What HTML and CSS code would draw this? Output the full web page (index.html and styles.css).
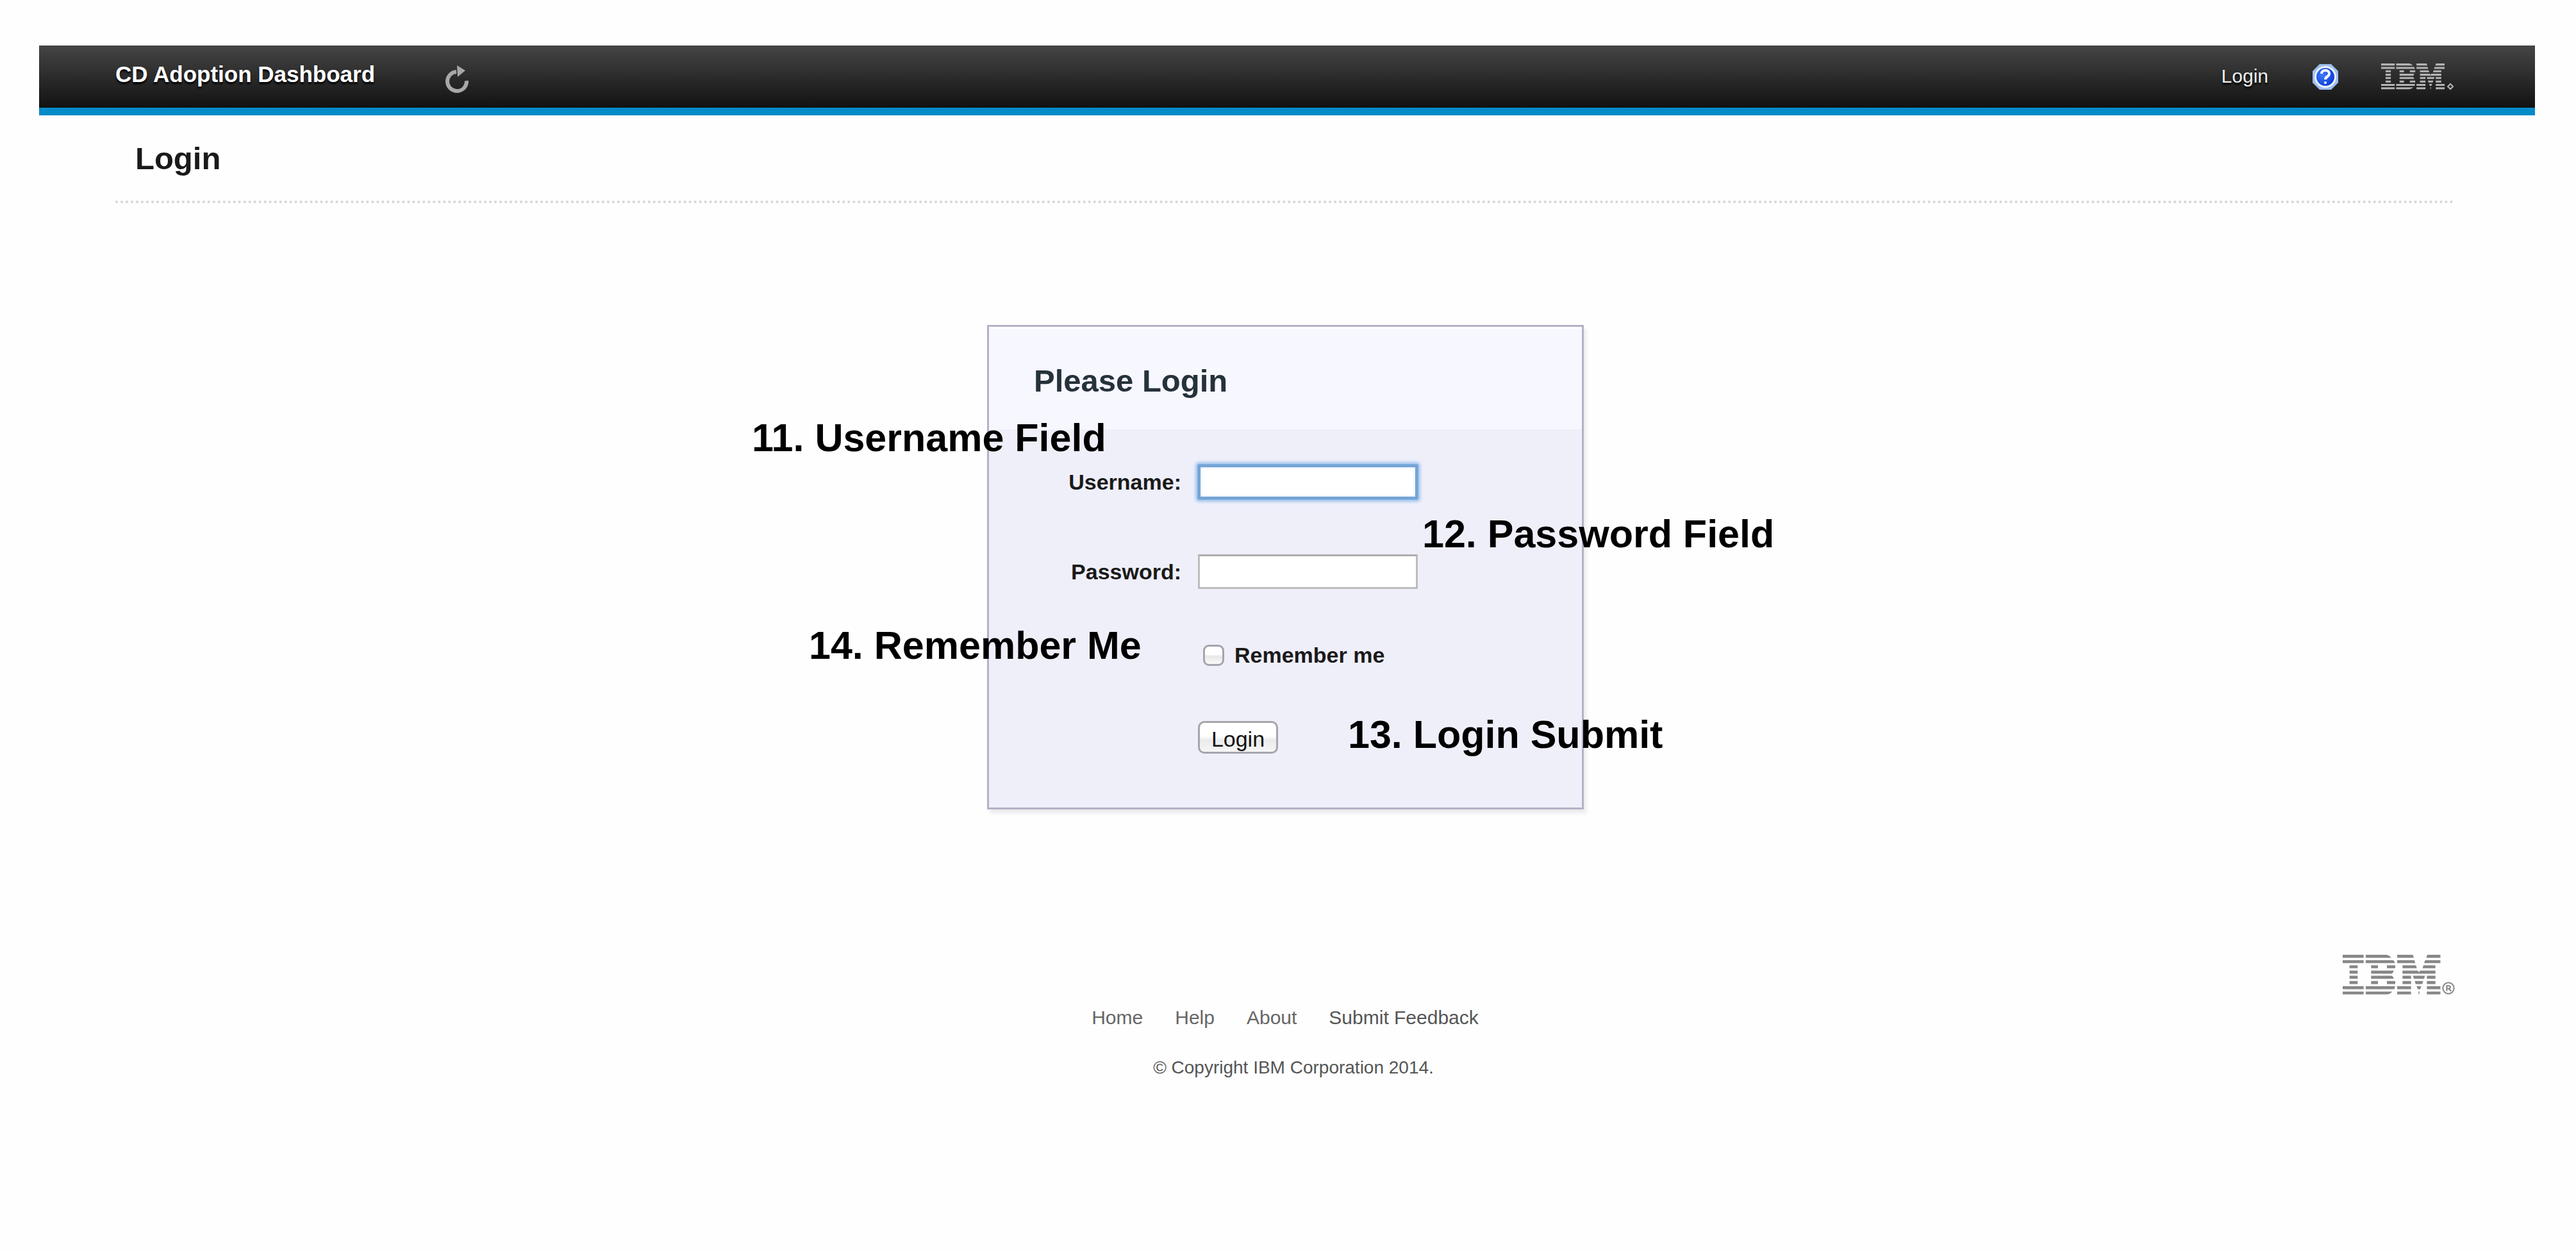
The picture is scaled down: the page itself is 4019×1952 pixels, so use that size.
FILE: index.html
```html
<!DOCTYPE html>
<html lang="en">
<head>
<meta charset="utf-8">
<title>CD Adoption Dashboard - Login</title>
<link rel="stylesheet" href="styles.css">
</head>
<body>
<svg class="defs" aria-hidden="true">
  <!-- Eight-stripe company mark, shared by header and footer -->
  <symbol id="ibm" viewBox="0 0 458 188">
    <path d="M0 2h98v14H0zM0 27h98v14H0zM32 51h38v14H32zM32 76h38v14H32zM32 100h38v14H32zM32 125h38v14H32zM0 149h98v14H0zM0 174h98v14H0z"/>
    <path d="M108 2h98q14 4 22 14H108zM108 27h128q8 6 9 14H108zM133 51h32v14h-32zM207 51h39v14h-39zM133 76h106q-2 9-8 14h-98zM133 100h98q7 6 8 14H133zM133 125h32v14h-32zM207 125h39v14h-39zM108 149h137q0 8-4 14H108zM108 174h124q-10 12-28 14h-96z"/>
    <path d="M255 2h73l5 14h-78zM255 27h80l5 14h-85zM280 51h63l4 14h-67zM280 76h72l5 8 5-8h72v14H280zM280 100h40v14h-40zM280 125h40v14h-40zM255 149h65v14h-65zM255 174h65v14h-65z"/>
    <path d="M396 2h62v14h-67zM386 27h72v14h-77zM378 51h56v14h-60zM394 100h40v14h-40zM394 125h40v14h-40zM394 149h64v14h-64zM394 174h64v14h-64zM329 100h56l-4 14h-48zM337 125h40l-5 14h-30zM346 149h22l-5 14h-12zM354 174h6l-2 14h-2z"/>
  </symbol>
</svg>

<header class="bar">
  <a class="brand" href="#">CD Adoption Dashboard</a>
  <button class="refresh" type="button" aria-label="Refresh">
    <svg width="38" height="44" viewBox="0 0 38 44">
      <path d="M17 10A15 15 0 1 0 33 24" fill="none" stroke="#a8a8a8" stroke-width="6"/>
      <path d="M18 0l13 8-12 10z" fill="#a8a8a8"/>
    </svg>
  </button>
  <nav class="tools">
    <a class="tool-link" href="#">Login</a>
    <a class="help" href="#" aria-label="Help">
      <svg width="40" height="40" viewBox="0 0 40 40">
        <defs>
          <radialGradient id="ball" cx="35%" cy="40%" r="70%">
            <stop offset="0" stop-color="#3f7cff"/><stop offset="1" stop-color="#0b3ad0"/>
          </radialGradient>
        </defs>
        <path d="M11 0h18l11 11v18L29 40H11L0 29V11z" fill="#9dbfee"/>
        <circle cx="20" cy="20" r="17" fill="#eef4ff"/>
        <circle cx="20" cy="20" r="14" fill="url(#ball)"/>
        <path d="M14 15c0-7 12-7 12 0 0 5-6 4-6 9" fill="none" stroke="#fff" stroke-width="4"/>
        <circle cx="20" cy="29" r="2" fill="#fff"/>
      </svg>
    </a>
    <svg class="mark mark-bar" viewBox="0 0 113 44" role="img" aria-label="IBM">
      <use href="#ibm" width="99" height="44"/>
      <path d="M108 34l4 4-4 4-4-4z" fill="none" stroke="currentColor" stroke-width="2"/>
    </svg>
  </nav>
</header>

<main class="page">
  <h1 class="page-title">Login</h1>

  <section class="card">
    <h2 class="card-title">Please Login</h2>
    <form class="form">
      <label class="label" for="username">Username:</label>
      <input class="field field-active" id="username" type="text">
      <label class="label" for="password">Password:</label>
      <input class="field" id="password" type="password">
      <div class="remember">
        <input class="check" id="remember" type="checkbox">
        <label for="remember">Remember me</label>
      </div>
      <button class="submit" type="submit">Login</button>
    </form>
    <span class="note note-user">11. Username Field</span>
    <span class="note note-pass">12. Password Field</span>
    <span class="note note-remember">14. Remember Me</span>
    <span class="note note-submit">13. Login Submit</span>
  </section>
</main>

<footer class="footer">
  <svg class="mark mark-foot" viewBox="0 0 525 188" role="img" aria-label="IBM">
    <use href="#ibm" width="458" height="188"/>
    <circle cx="495" cy="158" r="26" fill="none" stroke="currentColor" stroke-width="6"/>
    <path d="M487 172v-25h10a6 6 0 0 1 0 13h-10m9 0 12 12" fill="none" stroke="currentColor" stroke-width="6"/>
  </svg>
  <nav class="links">
    <a href="#">Home</a>
    <a href="#">Help</a>
    <a href="#">About</a>
    <a class="strong" href="#">Submit Feedback</a>
  </nav>
  <p class="copyright">© Copyright IBM Corporation 2014.</p>
</footer>
</body>
</html>
```
FILE: styles.css
```css
* { box-sizing: border-box; }

body {
  margin: 0;
  padding: 71px 64px 0 61px;
  background: #fefefe;
  color: #1a1a1a;
  font-family: "Liberation Sans", Arial, sans-serif;
}

a { color: inherit; text-decoration: none; }

.defs { display: none; }

/* Top bar */
.bar {
  display: flex;
  align-items: center;
  height: 109px;
  padding: 0 127px 2px 119px;
  border-bottom: 12px solid #048bc8;
  background: linear-gradient(#454545, #121212);
}

.brand {
  padding-bottom: 6px;
  color: #fff;
  font-size: 35px;
  font-weight: bold;
  line-height: 40px;
  text-shadow: 0 3px 3px #000;
}

.refresh {
  display: flex;
  margin-left: 110px;
  padding: 10px 0 0;
  border: 0;
  background: none;
}

.tools {
  display: flex;
  align-items: center;
  margin-left: auto;
}

.tool-link {
  color: #eee;
  font-size: 30px;
  line-height: 40px;
  text-shadow: 0 3px 3px #000;
}

.help { display: flex; margin: 2px 67px 0 69px; }

.mark { fill: currentColor; }
.mark-bar { width: 113px; height: 44px; color: #b4b4b4; }

/* Page body */
.page { padding: 37px 124px 0 119px; }

.page-title {
  margin: 0;
  padding: 0 30px 36px 31px;
  border-bottom: 4px dotted #d4d4d4;
  font-size: 49px;
  line-height: 60px;
}

/* Login card */
.card {
  position: relative;
  width: 931px;
  margin: 190px auto 0;
  border: 3px solid #b3b2c6;
  background: #efeffa;
  box-shadow: 4px 6px 6px rgba(0, 0, 0, 0.08);
}

.card-title {
  margin: 0;
  padding: 54px 70px 46px;
  background: #f7f7ff;
  box-shadow: inset 0 3px 0 #fff;
  color: #26323a;
  font-size: 49px;
  line-height: 60px;
}

.form {
  display: grid;
  grid-template-columns: 300px 343px;
  gap: 86px 26px;
  align-items: center;
  padding: 55px 0 84px;
  font-size: 34px;
  font-weight: bold;
  line-height: 34px;
}

.label { text-align: right; }

.field {
  width: 100%;
  height: 54px;
  padding: 4px 8px;
  border: 3px solid #bdbdbd;
  border-top-color: #adadad;
  background: #fff;
  font: inherit;
  outline: none;
}

.field-active {
  border: 4px solid #73a4d6;
  border-radius: 2px;
  box-shadow: 0 0 0 1px #7fadde, 0 0 4px 4px #a4c6ee, inset 0 0 4px #c5dcf3;
}

.remember {
  display: flex;
  grid-column: 2;
  align-items: center;
  gap: 16px;
  padding-left: 8px;
}

.check {
  width: 33px;
  height: 33px;
  margin: 0;
  border: 3px solid #a5a5ab;
  border-radius: 9px;
  background: linear-gradient(#fff 45%, #e8e8e8 55%, #fafafa);
  appearance: none;
}

.submit {
  grid-column: 2;
  justify-self: start;
  width: 125px;
  height: 51px;
  padding: 4px 0 0;
  border: 3px solid #a5a5ab;
  border-radius: 10px;
  background: linear-gradient(#fff 45%, #ebebeb 60%, #f6f6f6);
  color: #111;
  font-family: inherit;
  font-size: 34px;
  line-height: 40px;
}

/* Numbered callouts lying over the card */
.note {
  position: absolute;
  color: #000;
  font-size: 61px;
  font-weight: bold;
  line-height: 70px;
  white-space: nowrap;
}
.note-user { top: 138px; left: -370px; }
.note-pass { top: 288px; left: 676px; }
.note-remember { top: 462px; left: -281px; }
.note-submit { top: 601px; left: 560px; }

/* Footer */
.footer {
  display: flex;
  flex-direction: column;
  align-items: center;
  margin-top: 226px;
  padding: 0 125px 60px 119px;
  color: #666;
  font-size: 30px;
  line-height: 40px;
}

.mark-foot { align-self: flex-end; width: 175px; height: 63px; color: #868686; }

.links { display: flex; gap: 50px; margin-top: 16px; }
.strong { color: #555; }

.copyright {
  margin: 38px 0 0;
  padding-left: 26px;
  color: #555;
  font-size: 28px;
}
```
